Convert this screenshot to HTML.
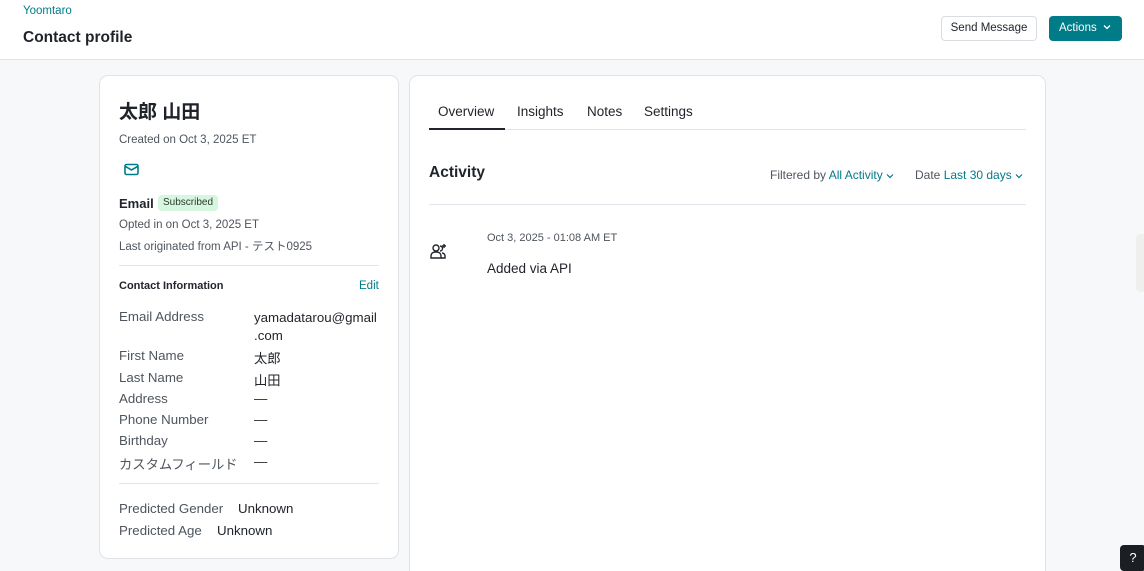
<!DOCTYPE html>
<html><head><meta charset="utf-8"><style>
*{margin:0;padding:0;box-sizing:border-box}
html,body{width:1144px;height:571px;overflow:hidden}
body{background:#f6f8fa;font-family:"Liberation Sans","Noto Sans CJK JP",sans-serif;color:#21252b;position:relative}
.a{position:absolute;white-space:nowrap}
.hdr{position:absolute;left:0;top:0;width:1144px;height:60px;background:#fff;border-bottom:1px solid #e1e5ea}
.card{position:absolute;background:#fff;border:1px solid #dfe3e8;border-radius:9px}
.lab{color:#4e555d;font-size:13.3px}
.val{color:#21252b;font-size:13.3px}
.teal{color:#007c89}
.s12{font-size:11.5px;color:#4e555d}
</style></head><body>
<div class="hdr"></div>
<div class="a teal" style="left:23px;top:5px;font-size:11.5px">Yoomtaro</div>
<div class="a" style="left:23px;top:29px;font-size:15.5px;font-weight:bold;color:#1f2329">Contact profile</div>
<div class="a" style="left:941px;top:16px;width:96px;height:25px;border:1px solid #d9dde2;border-radius:4px;font-size:11.5px;text-align:center;line-height:23px;color:#21252b">Send Message</div>
<div class="a" style="left:1049px;top:16px;width:73px;height:25px;background:#007c89;border-radius:4px;font-size:11.5px;color:#fff;line-height:25px;padding-left:10px">Actions <svg width="8" height="6" viewBox="0 0 8 6" style="margin-left:3px;vertical-align:1px"><path d="M1 1.5 L4 4.5 L7 1.5" fill="none" stroke="#fff" stroke-width="1.3"/></svg></div>

<div class="card" style="left:99px;top:75px;width:300px;height:484px"></div>
<div class="a" style="left:119px;top:97px;font-size:19px;font-weight:bold;color:#1f2329">太郎 山田</div>
<div class="a s12" style="left:119px;top:134px">Created on Oct 3, 2025 ET</div>
<svg class="a" style="left:124px;top:163px" width="15" height="13" viewBox="0 0 15 13"><rect x="1" y="1.5" width="13" height="10" rx="1.5" fill="none" stroke="#007c89" stroke-width="1.6"/><path d="M1.5 3.5 L7.5 7 L13.5 3.5" fill="none" stroke="#007c89" stroke-width="1.6"/></svg>
<div class="a" style="left:119px;top:196px;font-size:13px;font-weight:bold">Email</div>
<div class="a" style="left:158px;top:195px;height:16px;padding:0 5px;background:#d6f6df;border-radius:4px;font-size:10px;line-height:16px;color:#2b3a30">Subscribed</div>
<div class="a s12" style="left:119px;top:219px">Opted in on Oct 3, 2025 ET</div>
<div class="a s12" style="left:119px;top:238px">Last originated from API - テスト0925</div>
<div class="a" style="left:119px;top:265px;width:260px;border-top:1px solid #e1e5ea"></div>
<div class="a" style="left:119px;top:280px;font-size:11px;font-weight:bold">Contact Information</div>
<div class="a teal" style="left:359px;top:280px;font-size:11.5px">Edit</div>
<div class="a lab" style="left:119px;top:309px">Email Address</div>
<div class="a val" style="left:254px;top:309px;line-height:18px">yamadatarou@gmail<br>.com</div>
<div class="a lab" style="left:119px;top:348px">First Name</div><div class="a val" style="left:254px;top:348px">太郎</div>
<div class="a lab" style="left:119px;top:370px">Last Name</div><div class="a val" style="left:254px;top:370px">山田</div>
<div class="a lab" style="left:119px;top:391px">Address</div><div class="a val" style="left:254px;top:391px">—</div>
<div class="a lab" style="left:119px;top:412px">Phone Number</div><div class="a val" style="left:254px;top:412px">—</div>
<div class="a lab" style="left:119px;top:433px">Birthday</div><div class="a val" style="left:254px;top:433px">—</div>
<div class="a lab" style="left:119px;top:454px">カスタムフィールド</div><div class="a val" style="left:254px;top:454px">—</div>
<div class="a" style="left:119px;top:483px;width:260px;border-top:1px solid #e1e5ea"></div>
<div class="a lab" style="left:119px;top:501px">Predicted Gender</div><div class="a val" style="left:238px;top:501px">Unknown</div>
<div class="a lab" style="left:119px;top:523px">Predicted Age</div><div class="a val" style="left:217px;top:523px">Unknown</div>

<div class="card" style="left:409px;top:75px;width:637px;height:510px"></div>
<div class="a" style="left:438px;top:104px;font-size:13.5px">Overview</div>
<div class="a" style="left:517px;top:104px;font-size:13.5px">Insights</div>
<div class="a" style="left:587px;top:104px;font-size:13.5px">Notes</div>
<div class="a" style="left:644px;top:104px;font-size:13.5px">Settings</div>
<div class="a" style="left:429px;top:129px;width:597px;border-top:1px solid #e1e5ea"></div>
<div class="a" style="left:429px;top:128px;width:76px;border-top:2px solid #21252b"></div>
<div class="a" style="left:429px;top:164px;font-size:15.5px;font-weight:bold">Activity</div>
<div class="a" style="left:770px;top:168px;font-size:12px;color:#4e555d">Filtered by <span class="teal">All Activity</span> <svg width="8" height="6" viewBox="0 0 8 6"><path d="M1 1.5 L4 4.5 L7 1.5" fill="none" stroke="#007c89" stroke-width="1.2"/></svg></div>
<div class="a" style="left:915px;top:168px;font-size:12px;color:#4e555d">Date <span class="teal">Last 30 days</span> <svg width="8" height="6" viewBox="0 0 8 6"><path d="M1 1.5 L4 4.5 L7 1.5" fill="none" stroke="#007c89" stroke-width="1.2"/></svg></div>
<div class="a" style="left:429px;top:204px;width:597px;border-top:1px solid #e1e5ea"></div>
<svg class="a" style="left:430px;top:243px" width="17" height="17" viewBox="0 0 17 17" fill="none" stroke="#21252b" stroke-width="1.4"><circle cx="6" cy="5" r="3"/><path d="M1 15 v-2 a4 4 0 0 1 4-4 h2 a4 4 0 0 1 4 4 v2 z"/><path d="M10 3 a2.5 2.5 0 0 1 0 5 M12 10 a3 3 0 0 1 3 3 v2 h-4"/><path d="M14 1 v4 M12 3 h4"/></svg>
<div class="a" style="left:487px;top:232px;font-size:11px;color:#4e555d">Oct 3, 2025 - 01:08 AM ET</div>
<div class="a" style="left:487px;top:261px;font-size:13.5px">Added via API</div>

<div class="a" style="left:1136px;top:234px;width:10px;height:58px;background:#efefed;border-radius:4px"></div>
<div class="a" style="left:1120px;top:545px;width:26px;height:26px;background:#1b1f23;border-radius:4px;color:#fff;font-size:13px;text-align:center;line-height:26px">?</div>
</body></html>
